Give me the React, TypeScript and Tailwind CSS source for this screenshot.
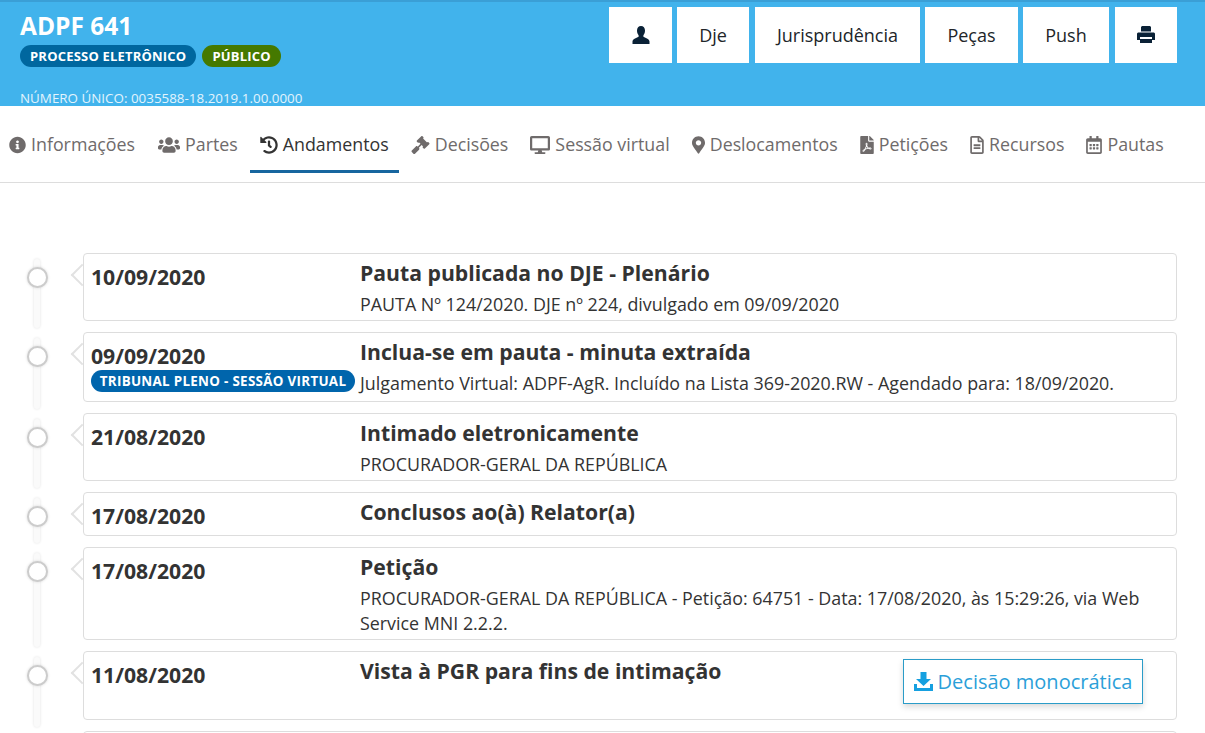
import React from "react";
import {
  FaInfoCircle,
  FaUsers,
  FaHistory,
  FaGavel,
  FaDesktop,
  FaMapMarkerAlt,
  FaFilePdf,
  FaRegFileAlt,
  FaRegCalendarAlt,
} from "react-icons/fa";

const UserIcon = () => (
  <svg viewBox="0 0 18 18" className="h-[18px] w-[18px] fill-[#0a2136]">
    <path d="M9 0C6.500 0 5 2 5 4.500c0 2 .7 3.600 1.600 4.800v1.400C4 12 .5 13 .5 15.500V18h17v-2.500c0-2.500-3.500-3.500-6.100-4.800V9.300C12.300 8.100 13 6.500 13 4.500 13 2 11.500 0 9 0z" />
  </svg>
);

const PrintIcon = () => (
  <svg viewBox="0 0 18 18" className="h-[18px] w-[18px] fill-[#0a2136]">
    <path d="M5 0h8l1 1v4.500H4V1z" />
    <path d="M1 6.500h16l1 1V14h-3v-3H3v3H0V7.500z" />
    <path d="M3 13h12v4H3z" />
  </svg>
);

const DownloadIcon = () => (
  <svg viewBox="0 0 19 19" className="h-[19px] w-[19px] shrink-0 fill-[#16a0e0]">
    <path d="M6.500 0h6v7h4.500l-7.500 7L2 7h4.500z" />
    <path d="M0 12h3v4h13v-4h3v7H0z" />
  </svg>
);

const tabs = [
  { label: "Informações", Icon: FaInfoCircle, w: "w-[17px]" },
  { label: "Partes", Icon: FaUsers, w: "w-[22px]", extra: "ml-px" },
  { label: "Andamentos", Icon: FaHistory, w: "w-[18px]", active: true },
  { label: "Decisões", Icon: FaGavel, w: "w-[19px]" },
  { label: "Sessão virtual", Icon: FaDesktop, w: "w-[20px]" },
  { label: "Deslocamentos", Icon: FaMapMarkerAlt, w: "w-[13px]" },
  { label: "Petições", Icon: FaFilePdf, w: "w-[14px]" },
  { label: "Recursos", Icon: FaRegFileAlt, w: "w-[14px]" },
  { label: "Pautas", Icon: FaRegCalendarAlt, w: "w-[16px]" },
];

const rows = [
  {
    date: "10/09/2020",
    title: "Pauta publicada no DJE - Plenário",
    text: "PAUTA Nº 124/2020. DJE nº 224, divulgado em 09/09/2020",
    h: "h-[68px]",
  },
  {
    date: "09/09/2020",
    badge: "TRIBUNAL PLENO - SESSÃO VIRTUAL",
    title: "Inclua-se em pauta - minuta extraída",
    text: "Julgamento Virtual: ADPF-AgR. Incluído na Lista 369-2020.RW - Agendado para: 18/09/2020.",
    h: "h-[70px]",
  },
  {
    date: "21/08/2020",
    title: "Intimado eletronicamente",
    text: "PROCURADOR-GERAL DA REPÚBLICA",
    h: "h-[68px]",
  },
  { date: "17/08/2020", title: "Conclusos ao(à) Relator(a)", h: "h-[44px]" },
  {
    date: "17/08/2020",
    title: "Petição",
    text: "PROCURADOR-GERAL DA REPÚBLICA - Petição: 64751 - Data: 17/08/2020, às 15:29:26, via Web Service MNI 2.2.2.",
    h: "h-[93px]",
  },
  {
    date: "11/08/2020",
    title: "Vista à PGR para fins de intimação",
    h: "h-[69px]",
    download: true,
  },
  { date: "", title: "", h: "h-[68px]" },
];

const headerButtons = [
  { w: "w-[63px]", icon: <UserIcon /> },
  { w: "w-[72px]", label: "Dje" },
  { w: "w-[165px] ml-px", label: "Jurisprudência" },
  { w: "w-[93px]", label: "Peças" },
  { w: "w-[86px]", label: "Push" },
  { w: "w-[62px] ml-px", icon: <PrintIcon /> },
];

export default function App() {
  return (
    <div className="h-[733px] overflow-hidden bg-white font-['Open_Sans',sans-serif] text-[#333]">
      {/* Header */}
      <header className="flex h-[106px] justify-between border-t-2 border-[#3a9fd6] bg-[#41b3ec] pl-5 pr-7">
        <div className="flex flex-col">
          <h1 className="mt-[7px] text-[24.5px] leading-[33px] font-bold text-white">ADPF 641</h1>
          <div className="mt-[3px] flex gap-[6px]">
            <span className="flex h-[22px] items-center rounded-full bg-[#00679f] px-[10px] pt-px text-[13px] font-bold tracking-[0.2px] text-white">
              PROCESSO ELETRÔNICO
            </span>
            <span className="flex h-[22px] items-center rounded-full bg-[#457900] px-[10px] pt-px text-[13px] font-bold tracking-[0.2px] text-white">
              PÚBLICO
            </span>
          </div>
          <div className="mt-auto mb-[-1px] text-[13.4px] leading-[18px] text-[#e3f4fd]">
            NÚMERO ÚNICO: 0035588-18.2019.1.00.0000
          </div>
        </div>
        <div className="mt-[5px] flex h-[56px] gap-[5px]">
          {headerButtons.map((b, i) => (
            <button
              key={i}
              className={`flex items-center justify-center bg-white text-[18px] text-[#212529] ${b.w}`}
            >
              {b.icon ?? b.label}
            </button>
          ))}
        </div>
      </header>

      {/* Tabs */}
      <nav className="flex h-[77px] gap-[2px] border-b border-[#ddd] -ml-px">
        {tabs.map(({ label, Icon, w, active, extra }) => (
          <div
            key={label}
            className={`mt-[18px] flex h-[49px] items-center gap-[5px] border-b-[3px] px-[10px] pb-[5px] text-[17.82px] whitespace-nowrap ${extra ?? ""} ${
              active ? "border-[#17669f] text-[#333]" : "border-transparent text-[#6f6b6b]"
            }`}
          >
            <Icon className={`h-[18px] shrink-0 ${w}`} />
            {label}
          </div>
        ))}
      </nav>

      {/* Timeline */}
      <main className="flex flex-col gap-[11px] pt-[70px] pr-7">
        {rows.map((r, i) => (
          <div key={i} className="relative flex pl-[83px]">
            {/* Track, circle and arrow */}
            <div className="absolute top-[6px] -bottom-[7px] left-[34px] w-[6px] rounded-full bg-[#fafafa] shadow-[0_0_3px_rgba(0,0,0,0.12)]" />
            <div className="absolute top-[14px] left-[27px] h-[21px] w-[21px] rounded-full border-2 border-[#cccccc] bg-white shadow-[0_0_3px_rgba(0,0,0,0.15)]" />
            <div className="absolute top-[14px] left-[74px] h-[16px] w-[16px] rotate-45 border-b-2 border-l-2 border-[#e2e2e2] bg-white" />

            <article
              className={`relative flex flex-1 rounded border border-[#ddd] bg-white pl-[7px] ${r.h}`}
            >
              <div className="w-[269px] shrink-0">
                <div className="mt-[9px] text-[21.2px] leading-[28px] font-bold text-[#333]">{r.date}</div>
                {r.badge && (
                  <span className="flex h-[22px] w-[264px] items-center justify-center rounded-full bg-[#0065ac] pt-px text-[13.4px] font-bold tracking-[0.3px] whitespace-nowrap text-white">
                    {r.badge}
                  </span>
                )}
              </div>
              <div className="flex-1 pr-6">
                <h3 className="mt-[5px] text-[21.2px] leading-[28px] font-bold text-[#333]">{r.title}</h3>
                {r.text && <p className="mt-[5px] text-[17.88px] leading-[25px] text-[#333]">{r.text}</p>}
              </div>
              {r.download && (
                <button className="absolute top-[7px] right-[33px] flex h-[45px] w-[240px] items-center justify-center gap-[5px] border border-[#2a9cc8] bg-white text-[20px] text-[#2b9fd9] shadow-[0_3px_6px_rgba(0,0,0,0.15)]">
                  <DownloadIcon />
                  Decisão monocrática
                </button>
              )}
            </article>
          </div>
        ))}
      </main>
    </div>
  );
}
